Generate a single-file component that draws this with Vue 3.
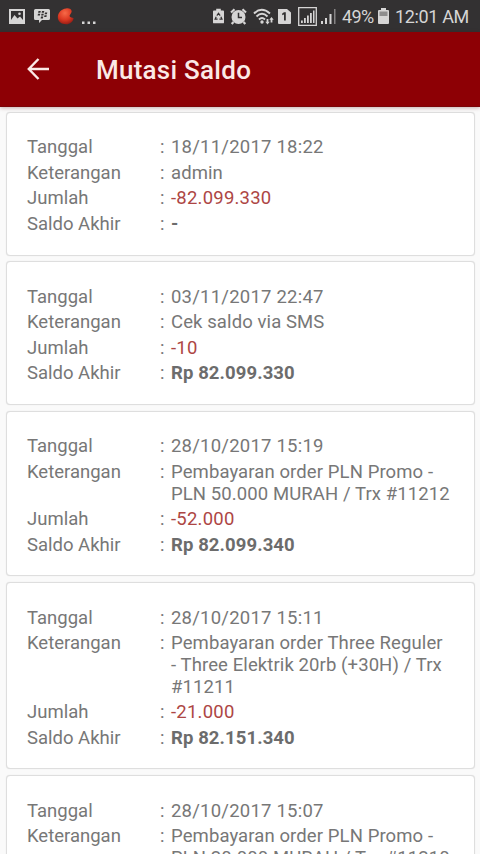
<template>
  <div class="screen">
    <div class="status">
      <div class="status__left">
        <svg class="status__picture" viewBox="0 0 16 15">
          <path fill-rule="evenodd" d="M0 0h16v15H0zM2 2v11h12V2z" />
          <path d="M2 11l3.500-5 3 3.500 2.500-2 3 3.500v2H2z" />
          <circle cx="10.500" cy="4.700" r="1.300" />
        </svg>
        <svg class="status__bbm" viewBox="0 0 16 14">
          <path d="M1.500 0h13Q16 0 16 1.500v8q0 1.500-1.500 1.500H8l-3 3v-3H1.500Q0 11 0 9.500v-8Q0 0 1.500 0z" />
          <path
            fill="#333132"
            d="M4.500 2h2.300l-.4 1.800H4.100zM8 2h2.300l-.4 1.800H7.600zM4 4.800h2.300l-.4 1.800H3.600zM7.500 4.800h2.300l-.4 1.800H7.100zM11 3.400h2.300l-.4 1.800h-2.300zM10.500 6.200h2.300L12.400 8h-2.300zM7 7.600h2.300l-.4 1.800H6.600z"
          />
        </svg>
        <svg class="status__app" viewBox="0 0 17 17">
          <defs>
            <radialGradient id="app-red" cx=".45" cy=".3" r=".7">
              <stop offset="0" stop-color="#f76a48" />
              <stop offset=".6" stop-color="#dc3922" />
              <stop offset="1" stop-color="#991e16" />
            </radialGradient>
          </defs>
          <path class="status__app-shape" d="M9 .4c3-.6 5.500.7 5.700 2.800.1 2-2 3.300-2.200 4.900.6 1.600 2.800 1.700 4.100 2.200-.6 3.500-3.600 6-7.400 6-5 0-8.400-2.800-8.400-7C.8 4.500 4.500 1 9 .4z" />
        </svg>
        <svg class="status__dots" viewBox="0 0 14 3">
          <path d="M0 .5h2.500V3H0zM5.500.5H8V3H5.500zM11 .5h2.500V3H11z" />
        </svg>
      </div>
      <div class="status__right">
        <svg class="status__saver" viewBox="0 0 12 16">
          <path d="M3.500 0h5v2H11q1 0 1 1v12q0 1-1 1H1q-1 0-1-1V3q0-1 1-1h2.500z" />
          <path fill="none" stroke="#333132" stroke-width="1.300" d="M4.200 7.500L6 5l1.800 2.500M8.600 8.800l1.200 2.700H7M5 11.500H2.300l1.200-2.700" />
        </svg>
        <svg class="status__alarm" viewBox="0 0 17 17">
          <circle cx="8.500" cy="9" r="7" />
          <path fill="none" stroke="#d6d5d5" stroke-width="2.200" d="M1 4.500L4.500 1.300M16 4.500l-3.500-3.200M3.500 14l-1.800 2M13.500 14l1.800 2" />
          <path fill="none" stroke="#333132" stroke-width="1.500" d="M8.500 4.800v4.700h3.500" />
        </svg>
        <svg class="status__wifi" viewBox="0 0 22 17">
          <g fill="none" stroke="#d6d5d5" stroke-width="1.900">
            <path d="M1 5.500q7.500-7.500 16 0M3.500 8.500q5.500-5.500 11 0M6 11.500q3-3 6 0" />
          </g>
          <circle cx="9" cy="14" r="1.700" />
          <path d="M14.500 16.500l-2.200-2.800h1.300V11h1.800v2.700h1.300zM18.500 9l2.200 2.800h-1.300v2.700h-1.800v-2.700h-1.300z" />
        </svg>
        <svg class="status__sim" viewBox="0 0 13 15">
          <path d="M0 0h9l4 3.500V14q0 1-1 1H1q-1 0-1-1z" />
          <path fill="#333132" d="M6 3.300h1.800v8.200H6V5.600l-1.800.7V4.500z" />
        </svg>
        <svg class="status__signal" viewBox="0 0 19 19">
          <path fill="none" stroke="#d6d5d5" stroke-width="1.300" d="M.7.700h17.600v17.600H.7z" />
          <path d="M3 13.500h1.800V16H3zM6 11h1.800v5H6zM9 8.500h1.800V16H9zM12 6h1.800v10H12zM15 3.500h1.500V16H15z" />
        </svg>
        <svg class="status__signal2" viewBox="0 0 15 15">
          <path d="M0 12h2v3H0zM4 9h2v6H4zM8.500 5h2v10h-2z" />
          <path fill="#858384" d="M13 0h1.500v15H13z" />
        </svg>
        <span class="status__percent">49%</span>
        <svg class="status__battery" viewBox="0 0 11 16">
          <path fill="#8e8d8d" d="M1 3h9v6H1z" />
          <path d="M3 0h5v2h2q1 0 1 1v12q0 1-1 1H1q-1 0-1-1V3q0-1 1-1h2zM1.500 3.500V8h8V3.500z" />
        </svg>
        <span class="status__time">12:01 AM</span>
      </div>
    </div>

    <header class="toolbar">
      <svg class="toolbar__back" viewBox="0 0 22 22">
        <path d="M11.500 1L1.800 11l9.700 10M2 11h20" />
      </svg>
      <h1 class="toolbar__title">Mutasi Saldo</h1>
    </header>

    <main class="list">
      <section v-for="item in items" :key="item.date" class="card">
        <div class="row">
          <span class="row__label">Tanggal</span>
          <span class="row__colon">:</span>
          <span class="row__value row__value--number">{{ item.date }}</span>
        </div>
        <div class="row">
          <span class="row__label">Keterangan</span>
          <span class="row__colon">:</span>
          <span class="row__value">
            <span v-for="line in item.note" :key="line" class="row__line">{{ line }}</span>
          </span>
        </div>
        <div class="row">
          <span class="row__label">Jumlah</span>
          <span class="row__colon">:</span>
          <span class="row__value row__value--number row__value--minus">{{ item.amount }}</span>
        </div>
        <div class="row">
          <span class="row__label">Saldo Akhir</span>
          <span class="row__colon">:</span>
          <span class="row__value row__value--bold">{{ item.balance }}</span>
        </div>
      </section>

      <!-- last entry runs off the bottom of the screen -->
      <section class="card">
        <div class="row">
          <span class="row__label">Tanggal</span>
          <span class="row__colon">:</span>
          <span class="row__value row__value--number">28/10/2017 15:07</span>
        </div>
        <div class="row">
          <span class="row__label">Keterangan</span>
          <span class="row__colon">:</span>
          <span class="row__value">
            <span class="row__line">Pembayaran order PLN Promo -</span>
            <span class="row__line">PLN 20.000 MURAH / Trx #11210</span>
          </span>
        </div>
      </section>
    </main>
  </div>
</template>

<script setup>
const items = [
  { date: '18/11/2017 18:22', note: ['admin'], amount: '-82.099.330', balance: '-' },
  { date: '03/11/2017 22:47', note: ['Cek saldo via SMS'], amount: '-10', balance: 'Rp 82.099.330' },
  {
    date: '28/10/2017 15:19',
    note: ['Pembayaran order PLN Promo -', 'PLN 50.000 MURAH / Trx #11212'],
    amount: '-52.000',
    balance: 'Rp 82.099.340'
  },
  {
    date: '28/10/2017 15:11',
    note: ['Pembayaran order Three Reguler', '- Three Elektrik 20rb (+30H) / Trx', '#11211'],
    amount: '-21.000',
    balance: 'Rp 82.151.340'
  }
]
</script>

<style>
body {
  margin: 0;
  overflow: hidden;
}
</style>

<style scoped>
.screen {
  display: flex;
  flex-direction: column;
  width: 480px;
  height: 854px;
  overflow: hidden;
  background: #fafafa;
  font-family: Roboto, sans-serif;
}

.status {
  display: flex;
  flex: none;
  justify-content: space-between;
  box-sizing: border-box;
  height: 32px;
  padding: 0 11px 0 9px;
  background: #333132;
  color: #d6d5d5;
}

.status svg {
  flex: none;
  fill: #d6d5d5;
}

.status__left,
.status__right {
  display: flex;
  align-items: center;
}

.status__picture {
  width: 16px;
  height: 15px;
}

.status__bbm {
  width: 16px;
  height: 14px;
  margin-left: 9px;
}

.status__app {
  width: 17px;
  height: 17px;
  margin-left: 7px;
}

.status__app-shape {
  fill: url(#app-red);
}

.status__dots {
  width: 14px;
  height: 3px;
  margin: 12px 0 0 8px;
}

.status__saver {
  width: 11px;
  height: 16px;
}

.status__alarm {
  width: 17px;
  height: 17px;
  margin-left: 6px;
}

.status__wifi {
  width: 22px;
  height: 17px;
  margin-left: 6px;
}

.status__sim {
  width: 13px;
  height: 15px;
  margin-left: 3px;
}

.status__signal {
  width: 19px;
  height: 19px;
  margin-left: 7px;
}

.status__signal2 {
  width: 15px;
  height: 15px;
  margin-left: 4px;
}

.status__percent {
  width: 32px;
  margin-left: 6px;
  font-size: 18px;
  letter-spacing: -0.6px;
}

.status__battery {
  width: 11px;
  height: 16px;
  margin-left: 4px;
}

.status__time {
  width: 74px;
  margin-left: 6px;
  font-size: 18px;
  letter-spacing: -0.35px;
  white-space: nowrap;
}

.toolbar {
  display: flex;
  z-index: 1;
  flex: none;
  align-items: center;
  box-sizing: border-box;
  height: 75px;
  padding-left: 27px;
  border-bottom: 1px solid #7a0509;
  background: #8d0005;
  box-shadow: 0 1px 4px rgba(80, 0, 0, 0.3);
}

.toolbar__back {
  width: 22px;
  height: 22px;
  fill: none;
  stroke: #fbe9e6;
  stroke-width: 2.4;
}

.toolbar__title {
  margin: 2px 0 0 47px;
  color: #fbe9e6;
  font-size: 26px;
  font-weight: 500;
  line-height: 30px;
  letter-spacing: 0.25px;
}

.list {
  display: flex;
  flex: none;
  flex-direction: column;
  gap: 5.8px;
  padding: 5px 5px 0 5.5px;
}

.card {
  display: flex;
  flex-direction: column;
  gap: 3.7px;
  padding: 24.4px 16px 19px 20.5px;
  border: 1px solid #dedede;
  border-radius: 4px;
  background: #fff;
  box-shadow: 0 0 1px rgba(0, 0, 0, 0.15);
}

.row {
  display: flex;
  color: #777;
  font-size: 18.5px;
  line-height: 21.8px;
}

.row__label {
  width: 133px;
}

.row__colon {
  width: 11px;
}

.row__value {
  flex: 1;
  letter-spacing: 0.1px;
  white-space: nowrap;
}

.row__line {
  display: block;
}

.row__value--number {
  letter-spacing: 0.22px;
}

.row__value--minus {
  color: #ad4644;
}

.row__value--bold {
  color: #6c6c6c;
  font-weight: 700;
}
</style>
